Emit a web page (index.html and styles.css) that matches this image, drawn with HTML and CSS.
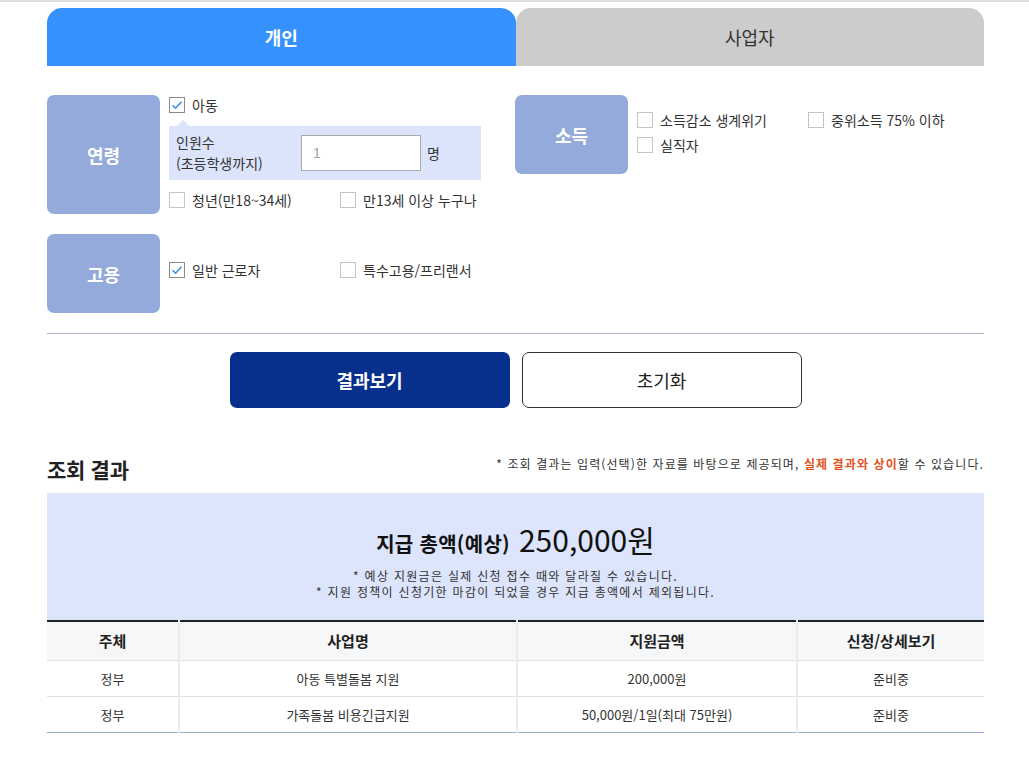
FILE: index.html
```html
<!DOCTYPE html>
<html lang="ko">
<head>
<meta charset="utf-8">
<title>지원금 조회</title>
<link rel="stylesheet" href="styles.css">
</head>
<body>
<div class="topbar"></div>
<div class="wrap">
  <div class="tabs">
    <div class="tab active">개인</div>
    <div class="tab">사업자</div>
  </div>

  <div class="form">
    <div class="col">
      <div class="group age">
        <div class="glabel">연령</div>
        <div class="gbody">
          <div class="row">
            <span class="chk on"><span class="box"><svg viewBox="0 0 16 16" width="16" height="16"><path d="M3.5 8.2 L6.6 11.2 L12.6 4.8" fill="none" stroke="#3a8ee6" stroke-width="1.6"/></svg></span>아동</span>
          </div>
          <div class="band">
            <div class="band-label">인원수<br>(초등학생까지)</div>
            <div class="num">1</div>
            <div class="unit">명</div>
          </div>
          <div class="row">
            <span class="chk"><span class="box"></span>청년(만18~34세)</span>
            <span class="chk"><span class="box"></span>만13세 이상 누구나</span>
          </div>
        </div>
      </div>
      <div class="group emp">
        <div class="glabel">고용</div>
        <div class="gbody">
          <div class="row">
            <span class="chk on"><span class="box"><svg viewBox="0 0 16 16" width="16" height="16"><path d="M3.5 8.2 L6.6 11.2 L12.6 4.8" fill="none" stroke="#3a8ee6" stroke-width="1.6"/></svg></span>일반 근로자</span>
            <span class="chk"><span class="box"></span>특수고용/프리랜서</span>
          </div>
        </div>
      </div>
    </div>
    <div class="col">
      <div class="group inc">
        <div class="glabel">소득</div>
        <div class="gbody">
          <div class="row">
            <span class="chk"><span class="box"></span>소득감소 생계위기</span>
            <span class="chk"><span class="box"></span>중위소득 75% 이하</span>
          </div>
          <div class="row">
            <span class="chk"><span class="box"></span>실직자</span>
          </div>
        </div>
      </div>
    </div>
  </div>

  <div class="divider"></div>

  <div class="btns">
    <div class="btn primary">결과보기</div>
    <div class="btn outline">초기화</div>
  </div>

  <div class="res-head">
    <h2>조회 결과</h2>
    <p class="note">* 조회 결과는 입력(선택)한 자료를 바탕으로 제공되며, <strong>실제 결과와 상이</strong>할 수 있습니다.</p>
  </div>

  <div class="summary">
    <div class="total"><span class="t-label">지급 총액(예상)</span><span class="t-amt">250,000원</span></div>
    <p class="s-note">* 예상 지원금은 실제 신청 접수 때와 달라질 수 있습니다.<br>* 지원 정책이 신청기한 마감이 되었을 경우 지급 총액에서 제외됩니다.</p>
  </div>

  <table class="result">
    <colgroup>
      <col class="c1"><col class="c2"><col class="c3"><col class="c4">
    </colgroup>
    <thead>
      <tr><th>주체</th><th>사업명</th><th>지원금액</th><th>신청/상세보기</th></tr>
    </thead>
    <tbody>
      <tr><td>정부</td><td>아동 특별돌봄 지원</td><td>200,000원</td><td>준비중</td></tr>
      <tr><td>정부</td><td>가족돌봄 비용긴급지원</td><td>50,000원/1일(최대 75만원)</td><td>준비중</td></tr>
    </tbody>
  </table>
</div>
</body>
</html>
```

FILE: styles.css
```css
* { box-sizing: border-box; }
html, body { margin: 0; padding: 0; background: #fff; }
body {
  font-family: "Noto Sans CJK KR", "Noto Sans", "Liberation Sans", sans-serif;
  color: #333;
  font-size: 14px;
}
.topbar { height: 2px; background: #dcdce1; }
.wrap { width: 937px; margin: 6px 0 0 47px; }

.tabs { display: flex; height: 58px; }
.tab {
  flex: 1;
  display: flex; align-items: center; justify-content: center;
  border-radius: 15px 15px 0 0;
  font-size: 18px;
  background: #cccccc;
  color: #333;
}
.tab.active { background: #3591fd; color: #fff; font-weight: 700; }

.form { display: grid; grid-template-columns: 468px 469px; padding-top: 29px; }
.group { display: flex; }
.glabel {
  width: 113px; flex: none;
  background: #94aadb;
  border-radius: 7px;
  color: #fff; font-weight: 700; font-size: 18px;
  display: flex; align-items: center; justify-content: center;
}
.gbody { padding-left: 9px; }
.age .glabel { height: 119px; }
.age .gbody { padding-top: 2px; }
.emp { margin-top: 20px; }
.emp .glabel { height: 79px; }
.emp .gbody { padding-top: 28px; }
.inc .glabel { height: 79px; }
.inc .gbody { padding-top: 17px; }
.inc .row + .row { margin-top: 9px; }

.row { display: flex; height: 16px; }
.chk {
  width: 171px; flex: none;
  display: flex; align-items: center;
  font-size: 14px; line-height: 16px; color: #333;
  white-space: nowrap;
}
.box {
  width: 16px; height: 16px; flex: none;
  border: 1px solid #c4c4c4;
  margin-right: 7px;
  display: flex; align-items: center; justify-content: center;
  background: #fff;
}
.chk.on .box { border-color: #8a8a8a; }
.box svg { display: block; margin: -1px; }

.band {
  position: relative;
  width: 312px; height: 54px;
  margin: 13px 0 12px;
  background: #dce4fb;
  display: flex; align-items: center;
  padding-left: 7px;
}
.band::before {
  content: "";
  position: absolute; left: 8px; top: -6px;
  border-left: 6px solid transparent;
  border-right: 6px solid transparent;
  border-bottom: 6px solid #dce4fb;
}
.band-label { width: 125px; font-size: 14px; line-height: 21px; color: #333; }
.num {
  width: 120px; height: 36px;
  border: 1px solid #aaaaaa;
  background: #fff;
  display: flex; align-items: center;
  padding-left: 11px;
  color: #a0a0a0; font-size: 14px;
  font-family: "Liberation Sans", "Noto Sans CJK KR", sans-serif;
}
.unit { margin-left: 6px; font-size: 14px; color: #333; }

.divider { height: 1px; background: #a6b0ca; margin-top: 20px; }

.btns { display: flex; justify-content: center; gap: 12px; margin-top: 18px; }
.btn {
  width: 280px; height: 56px;
  border-radius: 7px;
  display: flex; align-items: center; justify-content: center;
  font-size: 18px;
}
.btn.primary { background: #06308c; color: #fff; font-weight: 700; }
.btn.outline { background: #fff; border: 1px solid #333; color: #222; }

.res-head { display: flex; justify-content: space-between; align-items: center; margin-top: 47px; height: 28px; margin-bottom: 10px; }
.res-head h2 { margin: 0; font-size: 21px; font-weight: 700; color: #222; line-height: 28px; letter-spacing: -0.3px; }
.note { margin: 0 0 10px; font-size: 12px; line-height: 18px; color: #333; letter-spacing: 1.1px; }
.note strong { color: #e0531d; font-weight: 700; }

.summary { background: #dde5fc; height: 127px; padding-top: 24px; text-align: center; }
.total {
  height: 44px;
  display: flex; align-items: baseline; justify-content: center;
  color: #111; line-height: 44px;
}
.t-label { font-size: 20px; font-weight: 700; margin-right: 9px; letter-spacing: 0.3px; }
.t-amt { font-size: 30px; font-weight: 400; }
.s-note { margin: 7px 0 0; font-size: 12px; line-height: 16px; color: #333; letter-spacing: 1.3px; }

.result { width: 100%; border-collapse: collapse; border-top: 2px solid #222; border-bottom: 1px solid #98a9d6; }
.result col.c1 { width: 132px; }
.result col.c2 { width: 338px; }
.result col.c3 { width: 280px; }
.result col.c4 { width: 187px; }
.result th {
  height: 39px; background: #f6f7f9;
  font-size: 15px; font-weight: 700; color: #222;
  border-right: 2px solid #ececec;
  border-bottom: 1px solid #e2e2e2;
}
.result td {
  height: 36px; text-align: center;
  font-size: 13px; color: #333;
  border-right: 2px solid #ececec;
  border-bottom: 1px solid #e0e0e0;
}
.result th:last-child, .result td:last-child { border-right: none; }
.result tr:last-child td { border-bottom: none; }
```
